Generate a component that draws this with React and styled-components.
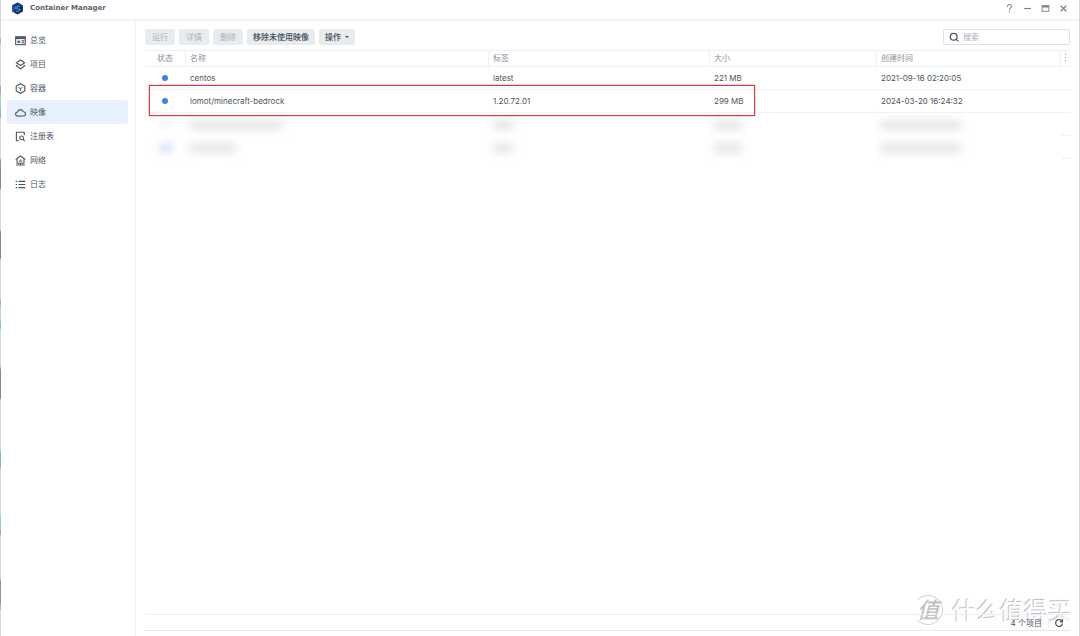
import React, { useState } from 'react';
import styled, { createGlobalStyle } from 'styled-components';

const GlobalStyle = createGlobalStyle`
  * {
    box-sizing: border-box;
  }

  body {
    margin: 0;
    background: #fff;
    color: #4c555f;
    font-family: Inter, "Noto Sans CJK SC", sans-serif;
    font-size: 8px;
    line-height: 12px;
  }

  button, input {
    font: inherit;
    color: inherit;
  }
`

const Window = styled.div`
  position: relative;
  display: flex;
  flex-direction: column;
  min-height: 100vh;
  border-right: 1px solid #d5d7d9;
  padding-left: 1px;

  /* sliver of the desktop showing behind the window */
  &::before {
    content: '';
    position: absolute;
    left: 0;
    top: 0;
    bottom: 0;
    width: 1px;
    background: linear-gradient(
      #d8d8d8 0 38px, #c9b8a8 38px 44px, #d8d8d8 44px 86px, #8fa9d8 86px 92px,
      #a8d8d4 96px 104px, #8fa9d8 114px 118px, #d8d8d8 118px 158px,
      #b88a84 160px 166px, #8a8790 168px 188px, #d8d8d8 190px 230px,
      #8a8790 232px 258px, #d8d8d8 260px 299px, #7cc8cc 300px 306px,
      #c4d0e4 308px 320px, #7cc8b8 322px 328px, #d8d8d8 330px 366px,
      #8a8790 370px 398px, #d8d8d8 400px 448px, #7cc0ac 453px 466px,
      #d8d8d8 470px 515px, #8cd4d4 517px 529px, #90a8dc 530px 534px,
      #d8d8d8 536px 578px, #8f93a8 581px 604px, #8cc8b4 604px 609px,
      #d8d8d8 610px
    );
  }
`

const TitleBar = styled.header`
  display: flex;
  align-items: center;
  height: 21px;
  padding: 0 11px 3px 10px;
  border-bottom: 2px solid #f3f5f7;
`

const Title = styled.h1`
  margin: 0 auto 0 6px;
  color: #5a636d;
  font-family: "DejaVu Sans", sans-serif;
  font-size: 7px;
  font-weight: 700;
`

const WindowButton = styled.button`
  display: flex;
  align-items: center;
  justify-content: center;
  width: 18px;
  height: 12px;
  padding: 0;
  border: none;
  background: none;
  color: #7a838c;
  cursor: pointer;

  &:last-child {
    margin-right: -4px;
  }
`

const Body = styled.div`
  display: flex;
  flex: 1;
`

const Sidebar = styled.nav`
  width: 135px;
  padding: 7px 7px 0 6px;
  border-right: 1px solid #edf0f3;
`

const NavItem = styled.a`
  display: flex;
  align-items: center;
  gap: 4px;
  height: 24px;
  padding: 0 8px;
  border-radius: 2px;
  background: ${props => props.$active ? '#e9f0fd' : 'transparent'};
  color: #4c555f;
  text-decoration: none;
`

const Main = styled.main`
  display: flex;
  flex: 1;
  flex-direction: column;
  min-width: 0;
  padding: 8px 9px 5px;
`

const Toolbar = styled.div`
  display: flex;
  gap: 4px;
  height: 21px;
  align-items: flex-start;
`

const Button = styled.button`
  display: flex;
  align-items: center;
  justify-content: center;
  gap: 4px;
  height: 16px;
  min-width: 30px;
  padding: 0 6px;
  border: none;
  border-radius: 2px;
  background: #e7ecf1;
  color: #414b55;
  font-weight: 500;
  cursor: pointer;

  &:disabled {
    color: #aab2ba;
    font-weight: 400;
    cursor: default;
  }
`

const Caret = styled.span`
  border: 2px solid transparent;
  border-top-color: #414b55;
  border-bottom: none;
`

const Search = styled.label`
  display: flex;
  align-items: center;
  gap: 4px;
  width: 127px;
  height: 16px;
  margin-left: auto;
  padding: 0 5px;
  border: 1px solid #dde4eb;
  border-radius: 2px;
`

const SearchInput = styled.input`
  flex: 1;
  min-width: 0;
  padding: 0;
  border: none;
  outline: none;
  background: none;

  &::placeholder {
    color: #a9b1b9;
    opacity: 1;
  }
`

const Table = styled.table`
  width: 100%;
  table-layout: fixed;
  border-collapse: separate;
  border-spacing: 0;
  border-top: 1px solid #edf0f3;
`

const Col = styled.col`
  width: ${props => props.$width};
`

const Th = styled.th`
  height: 16px;
  padding: 0 4px 1px;
  border-right: ${props => props.$last ? 'none' : '1px solid #edf0f3'};
  border-bottom: 1px solid #edf0f3;
  color: #8b939c;
  font-weight: 400;
  line-height: 14px;
  text-align: ${props => props.$center ? 'center' : 'left'};
`

const Td = styled.td`
  position: relative;
  height: 23px;
  padding: 0 4px;
  border-bottom: 1px solid ${props => props.$faint ? 'transparent' : '#f0f2f4'};
  text-align: ${props => props.$center ? 'center' : 'left'};
  white-space: nowrap;
`

const Dot = styled.span`
  display: inline-block;
  width: 6px;
  height: 6px;
  margin-right: 1px;
  border-radius: 50%;
  background: #3f80e8;
`

const Smudge = styled.span`
  display: inline-block;
  width: ${props => props.$width};
  height: 6px;
  background: ${props => props.$color || '#d3d6d9'};
  filter: blur(5px);
  vertical-align: middle;
`

const Highlight = styled.span`
  position: absolute;
  top: -5px;
  left: 4px;
  z-index: 1;
  width: 606px;
  height: 31px;
  border: 1px solid #e5343d;
  box-shadow: 0 0 1px #e5343d;
  pointer-events: none;
`

const Footer = styled.footer`
  position: relative;
  z-index: 1;
  display: flex;
  align-items: center;
  justify-content: flex-end;
  height: 17px;
  margin-top: auto;
  padding-right: 6px;
  border-top: 1px solid #edf0f3;
  border-bottom: 1px solid #e3e9f1;
`

const Refresh = styled.button`
  display: flex;
  margin-left: 6px;
  padding: 0 0 0 5px;
  border: none;
  border-left: 1px solid #edf0f3;
  background: none;
  cursor: pointer;
`

const Watermark = styled.div`
  position: absolute;
  right: 7px;
  bottom: 10px;
  display: flex;
  align-items: center;
  gap: 9px;
  color: #fff;
  font-family: "Noto Sans CJK SC", sans-serif;
  font-size: 24px;
  line-height: 32px;
  text-shadow: -1px -1px 1px #bcbcbc;
  pointer-events: none;
`

const Seal = styled.span`
  display: flex;
  align-items: center;
  justify-content: center;
  width: 30px;
  height: 30px;
  border: 1px solid #d0d0d0;
  border-left-color: transparent;
  border-radius: 50%;
  color: #c2c2c2;
  font-size: 22px;
  font-style: italic;
  font-weight: 500;
  line-height: 24px;
  padding-bottom: 4px;
  text-shadow: none;
`

const Icon = ({ size = 11, children }) => (
  <svg
    width={size}
    height={size}
    viewBox="0 0 16 16"
    fill="none"
    stroke="currentColor"
    strokeWidth="1.6"
    aria-hidden="true"
  >
    {children}
  </svg>
);

const Logo = () => (
  <svg width="13" height="13" viewBox="0 0 24 24" aria-hidden="true">
    <path d="M12 1l10 5.500v11L12 23 2 17.500v-11z" fill="#0b2f68" />
    <path d="M12 1l10 5.500L12 12 2 6.500z" fill="#123f80" />
    <path d="M2 6.500L6 9v10.500l-4-2z" fill="#1d5fb0" />
    <path d="M16 7.500L9 9.500 8 12l8.500 1.500-1.500 3-6 1" fill="none" stroke="#4796d2" strokeWidth="2" />
  </svg>
);

const navItems = [
  {
    label: '总览',
    icon: (
      <Icon>
        <rect x="1" y="2.500" width="14" height="11.500" />
        <path d="M1 4.500h14" strokeWidth="3" />
        <path d="M9.500 8.500h4M9.500 11.200h4" />
        <path d="M3.500 9.800h4" strokeWidth="3.200" />
      </Icon>
    ),
  },
  {
    label: '项目',
    icon: (
      <Icon>
        <path d="M8 1.500l6 4-6 4-6-4z" />
        <path d="M3.500 8.800L2 10l6 4.200L14 10l-1.500-1.200" />
      </Icon>
    ),
  },
  {
    label: '容器',
    icon: (
      <Icon>
        <path d="M8 1l6.200 3.500v7L8 15l-6.200-3.500v-7z" />
        <path d="M5 6.300L8 8l3-1.700M8 8v3.500" strokeWidth="1.400" />
      </Icon>
    ),
  },
  {
    label: '映像',
    icon: (
      <Icon>
        <path d="M4 13.200a3 3 0 0 1-.3-6A4.400 4.400 0 0 1 12.200 7a3.100 3.100 0 0 1 .1 6.200z" />
      </Icon>
    ),
  },
  {
    label: '注册表',
    icon: (
      <Icon>
        <path d="M5.500 14.200H2V1.800h11.500V6" />
        <circle cx="9.500" cy="10" r="2.700" />
        <path d="M11.500 12l2.700 2.700" />
      </Icon>
    ),
  },
  {
    label: '网络',
    icon: (
      <Icon>
        <path d="M1 6.500L8 1.500l7 5" />
        <path d="M3 6v6h10V6M1.500 14.500h13M8 12v2" />
        <path d="M6.300 10V8M9.700 10V8M8 6.500V10" strokeWidth="1.200" />
      </Icon>
    ),
  },
  {
    label: '日志',
    icon: (
      <Icon>
        <path d="M1 3.500h2M1 8h2M1 12.500h2M5 3.500h10M5 8h10M5 12.500h10" />
      </Icon>
    ),
  },
];

const images = [
  { name: 'centos', tag: 'latest', size: '221 MB', created: '2021-09-16 02:20:05' },
  { name: 'lomot/minecraft-bedrock', tag: '1.20.72.01', size: '299 MB', created: '2024-03-20 16:24:32', marked: true },
];

const hiddenRows = [
  { dot: '#f1f2f3', name: '92px' },
  { dot: '#b4cdf8', name: '46px' },
];

const App = () => {
  const [active, setActive] = useState('映像');
  const [query, setQuery] = useState('');

  return (
    <Window>
      <GlobalStyle />
      <TitleBar>
        <Logo />
        <Title>Container Manager</Title>
        <WindowButton aria-label="帮助">
          <Icon size={9}>
            <path d="M4.500 5.500V4.500a3.500 3.500 0 0 1 7 0c0 2.500-3.500 2.800-3.500 6M8 12.500v2.500" strokeWidth="1.800" />
          </Icon>
        </WindowButton>
        <WindowButton aria-label="最小化">
          <Icon size={9}><path d="M2 8h12" strokeWidth="2" /></Icon>
        </WindowButton>
        <WindowButton aria-label="最大化">
          <Icon size={9}>
            <rect x="2" y="3" width="12" height="10" />
            <path d="M2 4.500h12" strokeWidth="3.500" />
          </Icon>
        </WindowButton>
        <WindowButton aria-label="关闭">
          <Icon size={9}><path d="M3 3l10 10M13 3L3 13" strokeWidth="2.200" /></Icon>
        </WindowButton>
      </TitleBar>
      <Body>
        <Sidebar>
          {navItems.map(item => (
            <NavItem
              key={item.label}
              href="#"
              $active={item.label === active}
              onClick={() => setActive(item.label)}
            >
              {item.icon}
              {item.label}
            </NavItem>
          ))}
        </Sidebar>
        <Main>
          <Toolbar>
            <Button disabled>运行</Button>
            <Button disabled>详情</Button>
            <Button disabled>删除</Button>
            <Button>移除未使用映像</Button>
            <Button>操作<Caret /></Button>
            <Search>
              <Icon size={10}>
                <circle cx="7.500" cy="7.500" r="5.500" strokeWidth="2" />
                <path d="M11 11l4 4" strokeWidth="2" />
              </Icon>
              <SearchInput
                type="text"
                aria-label="搜索"
                placeholder="搜索"
                value={query}
                onChange={e => setQuery(e.target.value)}
              />
            </Search>
          </Toolbar>
          <Table>
            <colgroup>
              <Col $width="41px" />
              <Col $width="303px" />
              <Col $width="221px" />
              <Col $width="167px" />
              <Col />
              <Col $width="9px" />
            </colgroup>
            <thead>
              <tr>
                <Th $center>状态</Th>
                <Th>名称</Th>
                <Th>标签</Th>
                <Th>大小</Th>
                <Th>创建时间</Th>
                <Th $last aria-label="列">
                  <svg width="2" height="8" viewBox="0 0 2 8" fill="#87909a" aria-hidden="true">
                    <path d="M0 1h1v1H0zM0 4h1v1H0zM0 7h1v1H0z" />
                  </svg>
                </Th>
              </tr>
            </thead>
            <tbody>
              {images.map(image => (
                <tr key={image.name}>
                  <Td $center>
                    <Dot />
                    {image.marked && <Highlight />}
                  </Td>
                  <Td>{image.name}</Td>
                  <Td>{image.tag}</Td>
                  <Td>{image.size}</Td>
                  <Td>{image.created}</Td>
                  <Td />
                </tr>
              ))}
              {hiddenRows.map(row => (
                <tr key={row.name}>
                  <Td $faint $center><Smudge $width="12px" $color={row.dot} /></Td>
                  <Td $faint><Smudge $width={row.name} /></Td>
                  <Td $faint><Smudge $width="20px" /></Td>
                  <Td $faint><Smudge $width="28px" /></Td>
                  <Td $faint><Smudge $width="80px" /></Td>
                  <Td />
                </tr>
              ))}
            </tbody>
          </Table>
          <Footer>
            4 个项目
            <Refresh aria-label="刷新">
              <Icon size={10}>
                <path d="M13 5.500A5.500 5.500 0 1 0 13.500 9M13.500 2v4h-4" strokeWidth="2" />
              </Icon>
            </Refresh>
          </Footer>
        </Main>
      </Body>
      <Watermark aria-hidden="true">
        <Seal>值</Seal>
        什么值得买
      </Watermark>
    </Window>
  );
};

export default App;
